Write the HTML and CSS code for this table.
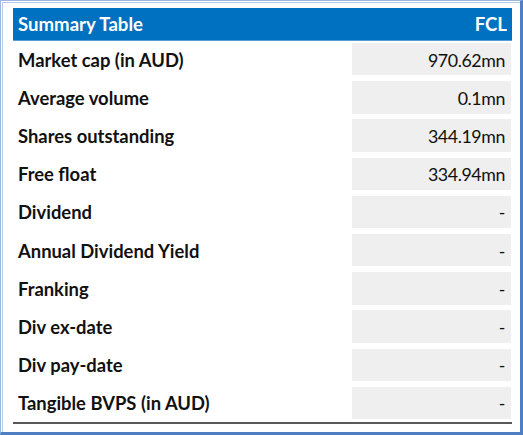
FILE: index.html
```html
<!DOCTYPE html>
<html>
<head>
<meta charset="utf-8">
<link rel="stylesheet" href="styles.css">
</head>
<body>
<div class="frame">
  <div class="table">
    <div class="head">
      <span>Summary Table</span>
      <span>FCL</span>
    </div>
    <div class="rows">
      <div class="row"><div class="label">Market cap (in AUD)</div><div class="value">970.62mn</div></div>
      <div class="row"><div class="label">Average volume</div><div class="value">0.1mn</div></div>
      <div class="row"><div class="label">Shares outstanding</div><div class="value">344.19mn</div></div>
      <div class="row"><div class="label">Free float</div><div class="value">334.94mn</div></div>
      <div class="row"><div class="label">Dividend</div><div class="value">-</div></div>
      <div class="row"><div class="label">Annual Dividend Yield</div><div class="value">-</div></div>
      <div class="row"><div class="label">Franking</div><div class="value">-</div></div>
      <div class="row"><div class="label">Div ex-date</div><div class="value">-</div></div>
      <div class="row"><div class="label">Div pay-date</div><div class="value">-</div></div>
      <div class="row"><div class="label">Tangible BVPS (in AUD)</div><div class="value">-</div></div>
    </div>
  </div>
</div>
</body>
</html>
```

FILE: styles.css
```css
html, body {
  margin: 0;
  padding: 0;
  background: #fff;
}
.frame {
  box-sizing: border-box;
  width: 523px;
  height: 435px;
  border-top: 1px solid #9db7dd;
  border-left: 1px solid #9db7dd;
  border-right: 3px solid #4f7fc2;
  border-bottom: 3px solid #4f7fc2;
  box-shadow: inset 1px 1px 0 #fff, inset 2px 2px 0 #b7cbe8;
  padding: 7px 8px 0 12px;
  font-family: Lato, "Open Sans", sans-serif;
  color: #111;
}
.table {
  width: 499px;
  border-bottom: 2px solid #595959;
}
.head {
  display: flex;
  justify-content: space-between;
  align-items: center;
  height: 33px;
  background: #0070c0;
  color: #fff;
  font-weight: bold;
  font-size: 18.6px;
  padding: 0 5px 0 5px;
  box-sizing: border-box;
  border-bottom: 1px solid #5a9bd5;
}
.rows {
  display: flex;
  flex-direction: column;
  gap: 5.8px;
  padding: 2px 0 3px 0;
}
.row {
  display: flex;
  justify-content: space-between;
  height: 32.4px;
}
.label {
  font-weight: bold;
  font-size: 18.4px;
  padding-left: 5px;
  display: flex;
  align-items: center;
  padding-top: 1px;
}
.value {
  width: 159px;
  margin-right: 1px;
  background: #efefef;
  font-size: 17.8px;
  letter-spacing: -0.4px;
  display: flex;
  align-items: center;
  justify-content: flex-end;
  padding-right: 6px;
  padding-top: 1px;
  box-sizing: border-box;
}
```
